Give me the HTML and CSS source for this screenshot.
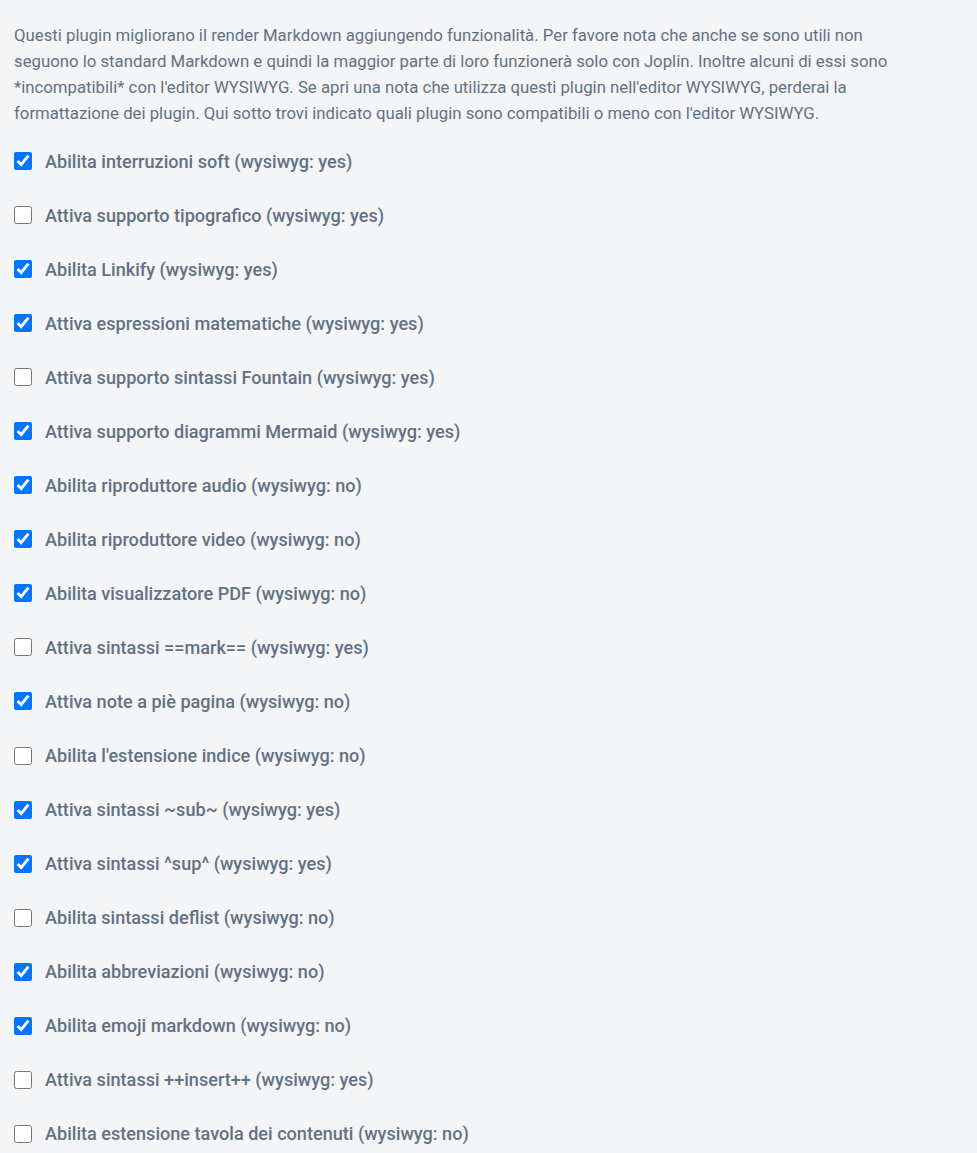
FILE: index.html
```html
<!DOCTYPE html>
<html lang="it">
<head>
<meta charset="utf-8">
<link rel="stylesheet" href="styles.css">
</head>
<body>
<div class="page">
  <p class="desc">Questi plugin migliorano il render Markdown aggiungendo funzionalità. Per favore nota che anche se sono utili non seguono lo standard Markdown e quindi la maggior parte di loro funzionerà solo con Joplin. Inoltre alcuni di essi sono *incompatibili* con l'editor WYSIWYG. Se apri una nota che utilizza questi plugin nell'editor WYSIWYG, perderai la formattazione dei plugin. Qui sotto trovi indicato quali plugin sono compatibili o meno con l'editor WYSIWYG.</p>
  <ul class="options">
    <li class="option"><label class="opt-label"><input type="checkbox" class="cb" checked><span>Abilita interruzioni soft (wysiwyg: yes)</span></label></li>
    <li class="option"><label class="opt-label"><input type="checkbox" class="cb"><span>Attiva supporto tipografico (wysiwyg: yes)</span></label></li>
    <li class="option"><label class="opt-label"><input type="checkbox" class="cb" checked><span>Abilita Linkify (wysiwyg: yes)</span></label></li>
    <li class="option"><label class="opt-label"><input type="checkbox" class="cb" checked><span>Attiva espressioni matematiche (wysiwyg: yes)</span></label></li>
    <li class="option"><label class="opt-label"><input type="checkbox" class="cb"><span>Attiva supporto sintassi Fountain (wysiwyg: yes)</span></label></li>
    <li class="option"><label class="opt-label"><input type="checkbox" class="cb" checked><span>Attiva supporto diagrammi Mermaid (wysiwyg: yes)</span></label></li>
    <li class="option"><label class="opt-label"><input type="checkbox" class="cb" checked><span>Abilita riproduttore audio (wysiwyg: no)</span></label></li>
    <li class="option"><label class="opt-label"><input type="checkbox" class="cb" checked><span>Abilita riproduttore video (wysiwyg: no)</span></label></li>
    <li class="option"><label class="opt-label"><input type="checkbox" class="cb" checked><span>Abilita visualizzatore PDF (wysiwyg: no)</span></label></li>
    <li class="option"><label class="opt-label"><input type="checkbox" class="cb"><span>Attiva sintassi ==mark== (wysiwyg: yes)</span></label></li>
    <li class="option"><label class="opt-label"><input type="checkbox" class="cb" checked><span>Attiva note a piè pagina (wysiwyg: no)</span></label></li>
    <li class="option"><label class="opt-label"><input type="checkbox" class="cb"><span>Abilita l'estensione indice (wysiwyg: no)</span></label></li>
    <li class="option"><label class="opt-label"><input type="checkbox" class="cb" checked><span>Attiva sintassi ~sub~ (wysiwyg: yes)</span></label></li>
    <li class="option"><label class="opt-label"><input type="checkbox" class="cb" checked><span>Attiva sintassi ^sup^ (wysiwyg: yes)</span></label></li>
    <li class="option"><label class="opt-label"><input type="checkbox" class="cb"><span>Abilita sintassi deflist (wysiwyg: no)</span></label></li>
    <li class="option"><label class="opt-label"><input type="checkbox" class="cb" checked><span>Abilita abbreviazioni (wysiwyg: no)</span></label></li>
    <li class="option"><label class="opt-label"><input type="checkbox" class="cb" checked><span>Abilita emoji markdown (wysiwyg: no)</span></label></li>
    <li class="option"><label class="opt-label"><input type="checkbox" class="cb"><span>Attiva sintassi ++insert++ (wysiwyg: yes)</span></label></li>
    <li class="option"><label class="opt-label"><input type="checkbox" class="cb"><span>Abilita estensione tavola dei contenuti (wysiwyg: no)</span></label></li>
  </ul>
</div>
</body>
</html>
```

FILE: styles.css
```css
html, body {
  margin: 0;
  padding: 0;
  background: #f4f5f6;
}
body {
  font-family: Roboto, "Noto Sans", sans-serif;
  color: #627284;
}
.page {
  padding: 22px 14px 0 14px;
}
.desc {
  margin: 0 0 8px 0;
  font-size: 16.75px;
  line-height: 26px;
  max-width: 890px;
}
.options {
  list-style: none;
  margin: 0;
  padding: 0;
}
.option {
  height: 54.06px;
  display: flex;
  align-items: center;
}
.opt-label {
  display: flex;
  align-items: center;
  gap: 13px;
  font-size: 18.1px;
  font-weight: 500;
  color: #627284;
}
.cb {
  width: 18px;
  height: 18px;
  margin: 0;
  accent-color: #0075ff;
}
```
